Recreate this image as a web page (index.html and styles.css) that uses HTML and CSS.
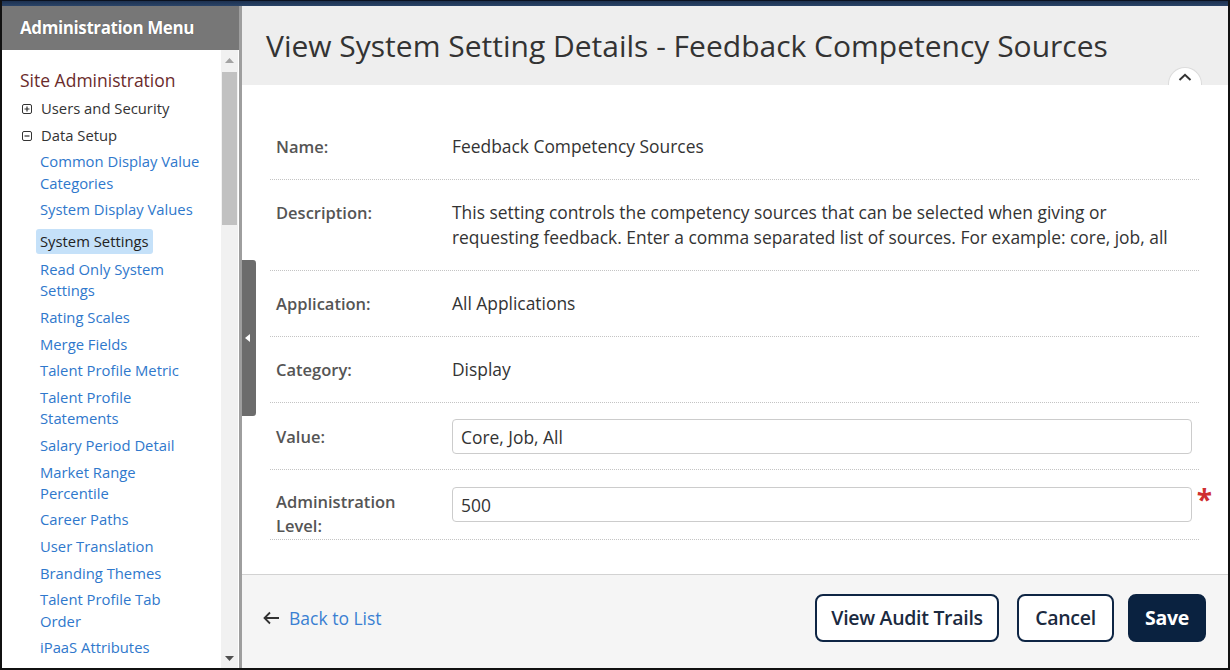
FILE: index.html
```html
<!DOCTYPE html>
<html lang="en">
<head>
<meta charset="utf-8">
<title>View System Setting Details</title>
<link rel="stylesheet" href="styles.css">
</head>
<body>
<div class="frame">
  <div class="topbar"></div>
  <div class="layout">
    <aside class="sidebar">
      <div class="side-head">Administration Menu</div>
      <div class="side-body">
        <div class="side-scroll">
          <h2 class="side-title">Site Administration</h2>
          <ul class="tree">
            <li class="tree-node">
              <svg class="box-icon" width="10" height="10" viewBox="0 0 10 10"><rect x="0.5" y="0.5" width="9" height="9" rx="1.5" fill="#fff" stroke="#333"/><path d="M2.5 5h5M5 2.5v5" stroke="#333" stroke-width="1.2"/></svg>
              <span>Users and Security</span>
            </li>
            <li class="tree-node">
              <svg class="box-icon" width="10" height="10" viewBox="0 0 10 10"><rect x="0.5" y="0.5" width="9" height="9" rx="1.5" fill="#fff" stroke="#333"/><path d="M2.5 5h5" stroke="#333" stroke-width="1.2"/></svg>
              <span>Data Setup</span>
            </li>
          </ul>
          <ul class="sub-list">
            <li>Common Display Value Categories</li>
            <li>System Display Values</li>
            <li class="active">System Settings</li>
            <li>Read Only System Settings</li>
            <li>Rating Scales</li>
            <li>Merge Fields</li>
            <li>Talent Profile Metric</li>
            <li>Talent Profile Statements</li>
            <li>Salary Period Detail</li>
            <li>Market Range Percentile</li>
            <li>Career Paths</li>
            <li>User Translation</li>
            <li>Branding Themes</li>
            <li>Talent Profile Tab Order</li>
            <li>iPaaS Attributes</li>
          </ul>
        </div>
        <div class="scrollbar">
          <div class="sb-btn"><svg width="9" height="5" viewBox="0 0 9 5"><path d="M0 5L4.5 0L9 5Z" fill="#a3a3a3"/></svg></div>
          <div class="sb-track"><div class="sb-thumb"></div></div>
          <div class="sb-btn"><svg width="9" height="5" viewBox="0 0 9 5"><path d="M0 0L4.5 5L9 0Z" fill="#505050"/></svg></div>
        </div>
      </div>
    </aside>
    <main class="main">
      <div class="handle"><svg width="5" height="8" viewBox="0 0 5 8"><path d="M5 0L0 4L5 8Z" fill="#fff"/></svg></div>
      <header class="page-head">
        <h1 class="page-title">View System Setting Details - Feedback Competency Sources</h1>
        <div class="collapse-tab"><svg width="14" height="8" viewBox="0 0 14 8"><path d="M1.5 7L7 1.8L12.5 7" fill="none" stroke="#333" stroke-width="2"/></svg></div>
      </header>
      <section class="page-body">
        <div class="form">
          <div class="row">
            <div class="label">Name:</div>
            <div class="value">Feedback Competency Sources</div>
          </div>
          <div class="row">
            <div class="label">Description:</div>
            <div class="value">This setting controls the competency sources that can be selected when giving or requesting feedback. Enter a comma separated list of sources. For example: core, job, all</div>
          </div>
          <div class="row">
            <div class="label">Application:</div>
            <div class="value">All Applications</div>
          </div>
          <div class="row">
            <div class="label">Category:</div>
            <div class="value">Display</div>
          </div>
          <div class="row row-input">
            <div class="label label-input">Value:</div>
            <div class="value"><input class="field" type="text" value="Core, Job, All"></div>
          </div>
          <div class="row row-admin">
            <div class="label label-wrap">Administration Level:</div>
            <div class="value value-req"><input class="field" type="text" value="500"><span class="req">*</span></div>
          </div>
        </div>
      </section>
      <footer class="page-foot">
        <a class="back" href="#">
          <svg width="18" height="14" viewBox="0 0 18 14"><path d="M8 1.5L2.5 7L8 12.5M2.5 7H17" fill="none" stroke="#333" stroke-width="1.8"/></svg>
          <span>Back to List</span>
        </a>
        <div class="actions">
          <button class="btn btn-outline btn-audit">View Audit Trails</button>
          <button class="btn btn-outline btn-cancel">Cancel</button>
          <button class="btn btn-primary">Save</button>
        </div>
      </footer>
    </main>
  </div>
</div>
</body>
</html>
```

FILE: styles.css
```css
* { box-sizing: border-box; }
html, body { margin: 0; padding: 0; }
body {
  width: 1230px;
  height: 670px;
  overflow: hidden;
  font-family: "Open Sans", "Liberation Sans", sans-serif;
  color: #333;
  background: #fff;
}
.frame {
  width: 1230px;
  height: 670px;
  border: 2px solid #111;
  border-top: 1px solid #0b1220;
  display: flex;
  flex-direction: column;
}
.topbar {
  height: 5px;
  background: linear-gradient(#1d3150, #2a4468);
  flex: none;
}
.layout {
  flex: 1;
  display: flex;
  min-height: 0;
}

/* Sidebar */
.sidebar {
  width: 240px;
  flex: none;
  display: flex;
  flex-direction: column;
  border-right: 3px solid #9e9e9e;
  background: #fff;
}
.side-head {
  height: 44px;
  flex: none;
  background: #777777;
  color: #fff;
  font-size: 17px;
  font-weight: 700;
  letter-spacing: -0.4px;
  padding: 0 0 2px 18px;
  display: flex;
  align-items: center;
  text-shadow: 0 0 1px rgba(0,0,0,0.4);
}
.side-body {
  flex: 1;
  display: flex;
  min-height: 0;
}
.side-scroll {
  width: 219px;
  flex: none;
  overflow: hidden;
  padding: 18px 0 0 18px;
}
.side-title {
  margin: 0;
  font-size: 17.5px;
  font-weight: 400;
  line-height: 24px;
  color: #6a2b2b;
}
.tree, .sub-list {
  list-style: none;
  margin: 0;
  padding: 0;
}
.tree-node {
  display: flex;
  align-items: center;
  margin-top: 6px;
  font-size: 14.8px;
  line-height: 21px;
  color: #333;
}
.box-icon { margin: 0 9px 0 2px; flex: none; }
.sub-list {
  padding-left: 20px;
  width: 182px;
}
.sub-list li {
  font-size: 14.8px;
  line-height: 21.25px;
  margin-top: 5.4px;
  color: #2f78cc;
}
.sub-list li.active {
  color: #222;
  background: #c5e1f9;
  border-radius: 3px;
  padding: 2px 4px;
  margin-left: -4px;
  margin-top: 8px;
  margin-bottom: 1px;
  width: max-content;
}
.scrollbar {
  width: 17px;
  flex: none;
  background: #f1f1f1;
  display: flex;
  flex-direction: column;
}
.sb-btn {
  height: 20px;
  display: flex;
  align-items: center;
  justify-content: center;
  flex: none;
}
.sb-track {
  flex: 1;
  padding: 2px 1px;
}
.sb-thumb {
  height: 153px;
  background: #c1c1c1;
}

/* Main */
.main {
  flex: 1;
  display: flex;
  flex-direction: column;
  position: relative;
  min-width: 0;
}
.handle {
  position: absolute;
  left: 0;
  top: 254px;
  width: 14px;
  height: 156px;
  background: #6c6c6c;
  border-radius: 0 3px 3px 0;
  display: flex;
  align-items: center;
  justify-content: center;
  padding-right: 3px;
  z-index: 2;
}
.page-head {
  height: 79px;
  flex: none;
  background: #eeeeee;
  position: relative;
  padding: 0 0 0 24px;
  display: flex;
  align-items: center;
}
.page-title {
  margin: 0;
  font-size: 30px;
  font-weight: 400;
  color: #333;
  letter-spacing: 0;
  white-space: nowrap;
}
.collapse-tab {
  position: absolute;
  right: 26px;
  bottom: 0;
  width: 34px;
  height: 18px;
  background: #fff;
  border: 1px solid #dcdcdc;
  border-bottom: none;
  border-radius: 17px 17px 0 0;
  display: flex;
  justify-content: center;
  padding-top: 5px;
}
.page-body {
  flex: 1;
  background: #fff;
  padding: 29px 29px 0 28px;
  border-bottom: 1px solid #d2d2d2;
}
.row {
  display: grid;
  grid-template-columns: 176px 740px;
  align-items: start;
  padding: 20px 0 20px 6px;
  border-bottom: 1px dotted #c4c4c4;
  font-size: 17.4px;
  line-height: 25px;
}
.row-input { padding: 16px 0 15px 6px; }
.row-admin { padding: 17px 0 1px 6px; }
.label {
  font-weight: 600;
  font-size: 16.5px;
  color: #555;
  padding-right: 30px;
}
.label-input { margin-top: 5px; }
.label-wrap { line-height: 24px; margin-top: 3px; }
.value { color: #333; }
.value-req { position: relative; }
.field {
  display: block;
  width: 740px;
  height: 35px;
  border: 1px solid #cccccc;
  border-radius: 4px;
  padding: 0 8px;
  font-family: "Open Sans", "Liberation Sans", sans-serif;
  font-size: 17.4px;
  color: #333;
  background: #fff;
}
.req {
  position: absolute;
  right: -20px;
  top: -3px;
  color: #cf2f2f;
  font-size: 28px;
  font-weight: 700;
  line-height: 30px;
}
.page-foot {
  height: 93px;
  flex: none;
  background: #f5f5f5;
  display: flex;
  align-items: center;
  justify-content: space-between;
  padding: 0 22px 8px 20px;
}
.back {
  display: flex;
  align-items: center;
  gap: 9px;
  color: #3a7fd2;
  text-decoration: none;
  font-size: 17.5px;
}
.actions {
  display: flex;
  align-items: center;
}
.btn {
  height: 48px;
  border-radius: 8px;
  font-family: "Open Sans", "Liberation Sans", sans-serif;
  font-size: 19.5px;
  font-weight: 600;
  letter-spacing: -0.3px;
  padding: 0 10px;
  cursor: pointer;
}
.btn-outline {
  background: #fff;
  border: 2px solid #0e2544;
  color: #1b2a3f;
}
.btn-audit { width: 184px; }
.btn-cancel { width: 97px; margin-left: 18px; }
.btn-primary {
  width: 78px;
  margin-left: 14px;
  background: #0a2240;
  border: 2px solid #0a2240;
  color: #fff;
  font-weight: 700;
}
```
